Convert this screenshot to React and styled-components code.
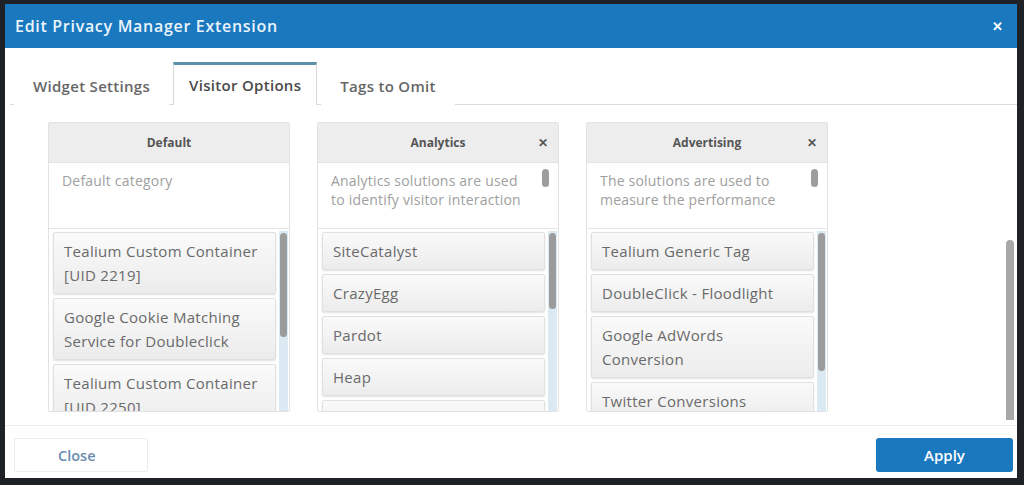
import React from "react";
import styled, { createGlobalStyle } from "styled-components";

const GlobalStyle = createGlobalStyle`
  html, body {
    margin: 0;
    padding: 0;
    background: #1e2227;
  }
  body {
    font-family: "Open Sans", "Liberation Sans", sans-serif;
  }
`;

const columns = [
  {
    title: "Default",
    closable: false,
    description: "Default category",
    descScroll: false,
    thumb: { top: 2, height: 104 },
    items: [
      "Tealium Custom Container [UID 2219]",
      "Google Cookie Matching Service for Doubleclick",
      "Tealium Custom Container [UID 2250]",
    ],
  },
  {
    title: "Analytics",
    closable: true,
    description: "Analytics solutions are used to identify visitor interaction",
    descScroll: true,
    thumb: { top: 2, height: 76 },
    items: ["SiteCatalyst", "CrazyEgg", "Pardot", "Heap", "Mixpanel"],
  },
  {
    title: "Advertising",
    closable: true,
    description: "The solutions are used to measure the performance",
    descScroll: true,
    thumb: { top: 2, height: 138 },
    items: [
      "Tealium Generic Tag",
      "DoubleClick - Floodlight",
      "Google AdWords Conversion",
      "Twitter Conversions",
    ],
  },
];

const tabs = ["Widget Settings", "Visitor Options", "Tags to Omit"];

const App = () => {
  return (
    <>
      <GlobalStyle />
      <Modal>
        <Header>
          <Title>Edit Privacy Manager Extension</Title>
          <HeaderClose>✕</HeaderClose>
        </Header>
        <TabBar>
          {tabs.map((t) => (
            <Tab key={t} active={t === "Visitor Options"}>
              {t}
            </Tab>
          ))}
        </TabBar>
        <Body>
          <Columns>
            {columns.map((c) => (
              <Column key={c.title}>
                <ColumnHead>
                  {c.title}
                  {c.closable && <ColumnClose>✕</ColumnClose>}
                </ColumnHead>
                <Description>
                  <DescText>{c.description}</DescText>
                  {c.descScroll && <DescThumb />}
                </Description>
                <ListWrap>
                  <List>
                    {c.items.map((it) => (
                      <Item key={it}>{it}</Item>
                    ))}
                  </List>
                  <Track>
                    <Thumb
                      style={{ top: c.thumb.top, height: c.thumb.height }}
                    />
                  </Track>
                </ListWrap>
              </Column>
            ))}
          </Columns>
          <OuterTrack>
            <OuterThumb />
          </OuterTrack>
        </Body>
        <Footer>
          <CloseButton>Close</CloseButton>
          <ApplyButton>Apply</ApplyButton>
        </Footer>
      </Modal>
    </>
  );
};

const Modal = styled.div`
  margin: 4px 7px 0 5px;
  height: 474px;
  background: #fff;
  display: flex;
  flex-direction: column;
  overflow: hidden;
`;

const Header = styled.div`
  height: 44px;
  flex-shrink: 0;
  background: #1a78bf;
  display: flex;
  align-items: center;
  justify-content: space-between;
  padding: 0 14px 0 10px;
`;

const Title = styled.div`
  color: #eaf4fb;
  font-size: 16px;
  font-weight: 600;
  letter-spacing: 0.7px;
`;

const HeaderClose = styled.div`
  color: #fff;
  font-size: 13px;
  font-weight: 700;
`;

const TabBar = styled.div`
  height: 56px;
  flex-shrink: 0;
  display: flex;
  align-items: flex-end;
  padding: 0 0 0 4px;
  margin: 0 0 0 5px;
  border-bottom: 1px solid #dcdcdc;
`;

const Tab = styled.div`
  box-sizing: border-box;
  display: flex;
  align-items: center;
  padding: 0 ${(p) => (p.active ? "15px" : "18px")};
  font-size: 15px;
  font-weight: 600;
  letter-spacing: 0.3px;
  color: ${(p) => (p.active ? "#4a4a4a" : "#666")};
  background: #fff;
  border: 1px solid ${(p) => (p.active ? "#d8d8d8" : "transparent")};
  border-top: 3px solid ${(p) => (p.active ? "#5c93ab" : "transparent")};
  border-bottom: none;
  margin-bottom: -1px;
  height: ${(p) => (p.active ? "43px" : "42px")};
  margin-left: ${(p) => (p.active ? "4px" : "0")};
  margin-right: ${(p) => (p.active ? "4px" : "0")};
`;

const Body = styled.div`
  flex: 1;
  display: flex;
  min-height: 0;
  overflow: hidden;
  border-bottom: 1px solid #ececec;
`;

const Columns = styled.div`
  flex: 1;
  display: flex;
  align-items: flex-start;
  gap: 27px;
  padding: 17px 0 0 43px;
`;

const Column = styled.div`
  width: 240px;
  border: 1px solid #e2e2e2;
  border-radius: 2px;
  background: #fff;
  display: flex;
  flex-direction: column;
`;

const ColumnHead = styled.div`
  position: relative;
  height: 39px;
  background: #ededed;
  display: flex;
  align-items: center;
  justify-content: center;
  font-size: 12px;
  font-weight: 700;
  color: #555;
  border-bottom: 1px solid #e4e4e4;
`;

const ColumnClose = styled.span`
  position: absolute;
  right: 10px;
  top: 11px;
  font-size: 12px;
  font-weight: 700;
  color: #555;
`;

const Description = styled.div`
  position: relative;
  height: 66px;
  box-sizing: border-box;
  padding: 8px 24px 0 13px;
  border-bottom: 1px solid #e6e6e6;
`;

const DescText = styled.div`
  font-size: 14px;
  line-height: 19px;
  letter-spacing: 0.2px;
  color: #a0a0a0;
`;

const DescThumb = styled.div`
  position: absolute;
  right: 9px;
  top: 6px;
  width: 7px;
  height: 18px;
  border-radius: 4px;
  background: #9d9d9d;
`;

const ListWrap = styled.div`
  height: 180px;
  display: flex;
  overflow: hidden;
  padding-top: 2px;
`;

const List = styled.div`
  flex: 1;
  display: flex;
  flex-direction: column;
  gap: 4px;
  padding: 1px 3px 0 4px;
  overflow: hidden;
`;

const Item = styled.div`
  flex-shrink: 0;
  box-sizing: border-box;
  padding: 6px 14px 6px 10px;
  font-size: 15px;
  line-height: 24px;
  letter-spacing: 0.3px;
  color: #6a6a6a;
  background: linear-gradient(#fafafa, #ececec);
  border: 1px solid #e0e0e0;
  border-radius: 2px;
  box-shadow: 0 1px 2px rgba(0, 0, 0, 0.12);
`;

const Track = styled.div`
  position: relative;
  width: 9px;
  margin-right: 1px;
  background: #dbe9f3;
`;

const Thumb = styled.div`
  position: absolute;
  left: 1px;
  width: 7px;
  border-radius: 4px;
  background: #9b9b9b;
`;

const OuterTrack = styled.div`
  position: relative;
  width: 10px;
  margin-right: 2px;
`;

const OuterThumb = styled.div`
  position: absolute;
  top: 135px;
  left: 1px;
  width: 8px;
  height: 180px;
  border-radius: 4px 4px 0 0;
  background: #a8a8a8;
`;

const Footer = styled.div`
  height: 52px;
  flex-shrink: 0;
  display: flex;
  align-items: center;
  justify-content: space-between;
  padding: 6px 4px 0 9px;
  box-sizing: border-box;
`;

const CloseButton = styled.button`
  width: 134px;
  height: 34px;
  background: #fff;
  border: 1px solid #ececec;
  border-radius: 2px;
  font-family: inherit;
  font-size: 14.5px;
  font-weight: 600;
  color: #6b8cb0;
  text-align: left;
  padding-left: 43px;
`;

const ApplyButton = styled.button`
  width: 137px;
  height: 34px;
  background: #1a78bf;
  border: none;
  border-radius: 3px;
  font-family: inherit;
  font-size: 15px;
  font-weight: 600;
  color: #fff;
`;

export default App;
